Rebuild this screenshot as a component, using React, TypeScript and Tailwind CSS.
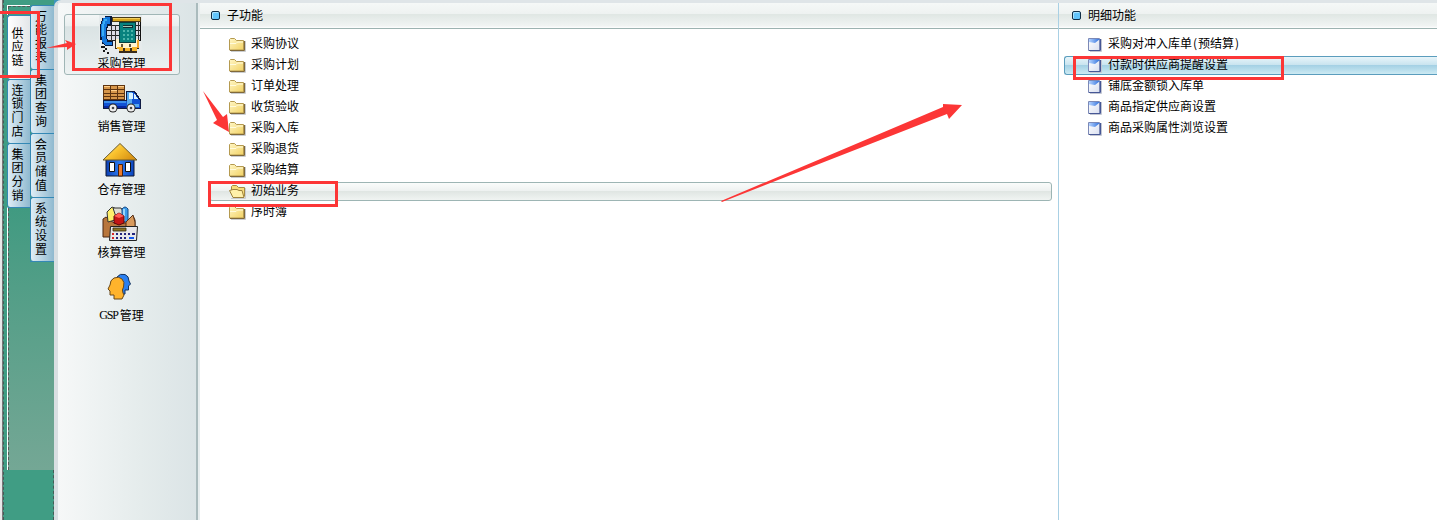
import React from "react";

const FONT = "font-['Noto_Sans_CJK_SC','Liberation_Sans',sans-serif]";

function PhoneIcon() {
  return (
    <svg width="44" height="40" viewBox="0 0 44 40" shapeRendering="crispEdges">
      <rect width="43" height="39" fill="#e6ebec" />
      <path d="M8 10h34v16H8z" fill="#222" />
      <path d="M8 11h13v4H8zM8 16h13v4H8zM8 21h13v4H8zM37 7h4v3h-4zM37 11h4v4h-4zM37 16h4v4h-4zM37 21h4v4h-4z" fill="#dcdce6" />
      <path d="M12 10h1v16h-1zM16 10h1v16h-1zM39 7h1v19h-1z" fill="#333" />
      <path d="M41 3h1v23h-1z" fill="#111" />
      <path d="M13 2h29v5H13z" fill="#4b3b16" />
      <path d="M14 3h27v3H14z" fill="#d8a51d" />
      <path d="M14 3h27v1H14z" fill="#f2cf5a" />
      <path d="M16 24h24v10h-2v4H20v-4h-4z" fill="#382c1c" />
      <path d="M17 24h22v9H17z" fill="#fff4cf" />
      <path d="M18 32h6v4h-4v-2h-2zM26 33h5v3h-5zM33 32h5v4h-5z" fill="#f5b52c" />
      <path d="M38 25h2v8h-2z" fill="#f0a52c" />
      <path d="M22 29h2v3h-2zM30 29h2v3h-2z" fill="#62563d" />
      <path d="M20 7h17v21H20z" fill="#063e40" />
      <path d="M21 8h15v19H21z" fill="#08827f" />
      <path d="M24 10h10v3H24z" fill="#102d32" />
      <path d="M24 11h9v1h-9z" fill="#a7c7b4" />
      {[15, 19, 23].map((y) => [24, 28, 32].map((x) => <path key={`${x}-${y}`} d={`M${x} ${y}h2v2h-2z`} fill="#4cb4aa" />))}
      <path d="M6 1h7v9h-4v3H8v11h1v2h5v5H6l-2-2H3v-4H1V9h1V6h1V3h3z" fill="#07183c" />
      <path d="M6 2h5v7H8v3H7v12h1v3h5v3H6l-2-3H3v-5H2V9h1V6h1V3h2z" fill="#1578dc" />
      <path d="M5 4h3v2H6v3H4V6h1zM3 9h2v12H3z" fill="#38acf6" />
      <path d="M4 31h2v2h2v2H6v2h4v2H8v-2H4v-2h2v-2H4zM2 31h2v2H2z" fill="#171717" />
    </svg>
  );
}

function TruckIcon() {
  return (
    <svg width="39" height="29" viewBox="0 0 39 29" shapeRendering="crispEdges">
      <path d="M1 1h22v15H1z" fill="#5e3410" />
      <path d="M2 2h6v3H2zM9 2h6v3H9zM16 2h6v3h-6zM2 6h6v3H2zM9 6h6v3H9zM16 6h6v3h-6zM2 10h6v2H2zM9 10h6v2H9zM16 10h6v2h-6zM2 13h6v2H2zM9 13h6v2H9zM16 13h6v2h-6z" fill="#d6964a" />
      <path d="M2 2h6v1H2zM9 6h6v1H9zM16 2h6v1h-6z" fill="#ffcf8a" />
      <path d="M0 16h24V7h9l4 6 2 3v9H1V16z" fill="#101c44" />
      <path d="M2 17h23V8h7l4 6 2 3v7H2z" fill="#1152d4" />
      <path d="M25 8h5v12h7v3H25z" fill="#57a9ef" />
      <path d="M27 9h4v6h-4zM32 9l4 6h-4z" fill="#d9f4ff" />
      <path d="M2 17h22v2H2z" fill="#3c8fed" />
      <path d="M2 22h22v2H2z" fill="#0726a0" />
      {[11, 29].map((x) => (
        <g key={x} shapeRendering="auto">
          <circle cx={x} cy="24" r="4.500" fill="#222" />
          <circle cx={x} cy="24" r="3.500" fill="#eee" />
          <circle cx={x} cy="24" r="1.300" fill="#444" />
        </g>
      ))}
    </svg>
  );
}

function HouseIcon() {
  return (
    <svg width="36" height="36" viewBox="0 0 36 36">
      <defs>
        <linearGradient id="roof" x1="0" x2="1" y1="0" y2=".6">
          <stop stopColor="#fff0a0" />
          <stop offset=".5" stopColor="#fac32e" />
          <stop offset="1" stopColor="#d99415" />
        </linearGradient>
        <linearGradient id="wall">
          <stop stopColor="#0b3fb3" />
          <stop offset=".5" stopColor="#2d7bf2" />
          <stop offset="1" stopColor="#0b45bd" />
        </linearGradient>
      </defs>
      <path d="M4 17h28v17H4z" fill="url(#wall)" stroke="#101930" />
      <path d="M18 1.500 1 18h34z" fill="url(#roof)" stroke="#6b5a2b" />
      <path d="M7.500 20.500h5v9h-5zM23.500 20.500h5v9h-5z" fill="#fff" stroke="#111" />
      <path d="M16.500 22.500h4V34h-4z" fill="#ec7c2b" stroke="#4b200b" />
    </svg>
  );
}

function AccountingIcon() {
  return (
    <svg width="37" height="36" viewBox="0 0 37 36">
      <path d="M1 13 4 11 12 17 24 17 31 10 33 14V31H1z" fill="#b8763c" stroke="#4a2915" />
      <path d="m5 6 5-5 7 3-4 10-7 2z" fill="#fff06b" stroke="#333" />
      <path d="M11 2h8l4 6-9 3z" fill="#deded4" stroke="#333" />
      <path d="M20 3q3-4 6 0v13h-6z" fill="#3b9be9" stroke="#174884" />
      <path d="M22 3v12" stroke="#b9e9ff" strokeWidth="1.500" />
      <path d="m12 10 5-3 5 3v7l-5 2-5-2z" fill="#c51616" stroke="#5b0909" />
      <path d="m12 10 5-3 5 3-5 2z" fill="#ff5b52" />
      <path d="m24 16 7-7 2 7v5h-9z" fill="#d89a5c" stroke="#563018" />
      <path d="M8.500 20.500h27l-1 14h-27z" fill="#e7e7ea" stroke="#222" />
      <path d="M11 22h13v3H11z" fill="#8c7525" stroke="#332a0d" strokeWidth=".8" />
      <g shapeRendering="crispEdges">
        <path d="M10 27h2v2h-2zM10 31h2v2h-2z" fill="#d62323" />
        <path d="M14 27h2v2h-2zM18 27h2v2h-2zM22 27h2v2h-2zM26 27h2v2h-2zM30 27h3v2h-3zM14 31h2v2h-2zM18 31h2v2h-2zM22 31h2v2h-2z" fill="#24247d" />
        <path d="M27 31h5v2h-5z" fill="#1559ee" />
      </g>
    </svg>
  );
}

function PeopleIcon() {
  return (
    <svg width="25" height="27" viewBox="0 0 25 27">
      <path d="M10 4Q13 0 18 1.500 22 3 22 8l1.500 3-2 2v4H18v4l-6 1z" fill="#2a7ff0" stroke="#14335e" />
      <path d="M7 5q5-2 8 1 3 3 1.500 8-2 3-.5 6l1 2-2 4H7v-4H3v-4l-2-2 2-4q0-5 4-7z" fill="#ffb32c" stroke="#684719" />
    </svg>
  );
}

function FolderIcon({ open = false }: { open?: boolean }) {
  return (
    <svg width="17" height="15" viewBox="0 0 17 15" className="shrink-0">
      <defs>
        <linearGradient id="manila" x1="0" x2="1" y1="0" y2="1">
          <stop stopColor="#fff6c4" />
          <stop offset="1" stopColor="#f2d264" />
        </linearGradient>
      </defs>
      <path d="M2 14.500h14.500V4" fill="none" stroke="#c9ccd0" />
      {open ? (
        <>
          <path d="M2.500 10V2.500l1-1h4l2 2h6v9" fill="#f7dc79" stroke="#a58a42" />
          <path d="M.5 6.500 4 5.500h4l2 1h3l2 7H4z" fill="#fff0a9" stroke="#9e823c" />
        </>
      ) : (
        <>
          <path d="M.5 13V2.500l1-1h4l2 2h7V13z" fill="url(#manila)" stroke="#b59a50" />
          <path d="M1 6.500h6l1.500-1.500H14" fill="none" stroke="#fffbdc" />
          <path d="M1 13.500h14.500V4" fill="none" stroke="#80693a" />
        </>
      )}
    </svg>
  );
}

function FormIcon() {
  return (
    <svg width="14" height="15" viewBox="0 0 14 15" className="shrink-0">
      <defs>
        <linearGradient id="flap" x1="0" x2="1">
          <stop stopColor="#b3d2ff" />
          <stop offset="1" stopColor="#2f6fdb" />
        </linearGradient>
        <linearGradient id="sheet" x1="0" x2="1" y1="0" y2="1">
          <stop stopColor="#fff" />
          <stop offset="1" stopColor="#d9dff0" />
        </linearGradient>
      </defs>
      <path d="M2 14.500h11.500V2" fill="none" stroke="#c3c7d3" />
      <path d="M.5 1.500h11v12H.5z" fill="url(#sheet)" stroke="#7c89b6" />
      <path d="M1 2h11L7 6 1 5z" fill="url(#flap)" />
      <path d="M1 13.500h11.500V2" fill="none" stroke="#465795" />
    </svg>
  );
}

function PanelHeader({ title }: { title: string }) {
  return (
    <div className="flex h-[26px] shrink-0 items-center border-b border-[#9db3b1] bg-[linear-gradient(#f5f8f7,#eef2f1_44%,#e0e7e4_46%,#f1f4f3_92%,#fff)] text-[12px]">
      <i className="mr-[7px] h-[9px] w-[9px] rounded-[2px] border border-[#102d46] bg-[#62c4fb] shadow-[inset_1px_1px_0_#a9e2ff]" />
      <span className="-translate-y-px">{title}</span>
    </div>
  );
}

function VerticalTab({ label, active = false }: { label: string; active?: boolean }) {
  return (
    <div
      className={`flex h-16 shrink-0 flex-col items-center justify-center rounded-l-[3px] border-t border-l border-[#3488b5] pr-[3px] pb-[3px] text-[12px] ${
        active ? "bg-linear-to-r from-white to-[#e3e6e8]" : "bg-linear-to-r from-[#dfedf5] to-[#8fb9cf]"
      }`}
    >
      {[...label].map((c, i) => (
        <span key={i} className="block h-[13.600px] leading-[13.600px]">{c}</span>
      ))}
    </div>
  );
}

const modules = [
  { label: "采购管理", icon: <PhoneIcon />, shift: "pr-[3px]" },
  { label: "销售管理", icon: <TruckIcon />, shift: "pr-[2px] pt-px" },
  { label: "仓存管理", icon: <HouseIcon />, shift: "pr-[5px] pb-[2px]" },
  { label: "核算管理", icon: <AccountingIcon />, shift: "pr-[4px]" },
  { label: "管理", latin: "GSP", icon: <PeopleIcon />, shift: "pr-[5px] pb-[2px]" },
];

const subFunctions = ["采购协议", "采购计划", "订单处理", "收货验收", "采购入库", "采购退货", "采购结算", "初始业务", "序时簿"];
const details = ["采购对冲入库单(预结算)", "付款时供应商提醒设置", "铺底金额锁入库单", "商品指定供应商设置", "商品采购属性浏览设置"];

function RowText({ text }: { text: string }) {
  return (
    <span className="-translate-y-[2px] whitespace-pre">
      {text.split(/([()])/).map((part, i) =>
        part === "(" || part === ")" ? (
          <span key={i} className="inline-block w-[6px] text-center">{part}</span>
        ) : (
          part
        ),
      )}
    </span>
  );
}

export default function App() {
  return (
    <div className={`relative flex h-[520px] w-[1437px] overflow-hidden bg-white text-[12px] leading-[14px] text-black ${FONT}`}>
      <nav className="flex w-[54px] shrink-0 border-l-2 border-[#e8e8e8] bg-[#409d84]">
        <div className="w-[5px] shrink-0 border-l border-[#777] bg-[#409d84]">
          <div className="h-full border-l border-dashed border-[#455b57]" />
        </div>
        <div className="flex w-[23px] shrink-0 flex-col">
          <div className="h-[5px] shrink-0" />
          <div className="h-[10px] shrink-0 border-t border-l border-white">
            <div className="h-full border-t border-l border-dashed border-[#555]" />
          </div>
          <VerticalTab label="供应链" active />
          <VerticalTab label="连锁门店" />
          <VerticalTab label="集团分销" />
          <div className="h-[263px] shrink-0 border-t border-l border-t-[#3488b5] border-l-white bg-linear-to-b from-[#409a81] to-[#74a795]">
            <div className="h-full border-l border-dashed border-[#555]" />
          </div>
        </div>
        <div className="flex w-[24px] shrink-0 flex-col pt-[5px]">
          <VerticalTab label="万能报表" />
          <VerticalTab label="集团查询" />
          <VerticalTab label="会员储值" />
          <VerticalTab label="系统设置" />
          <div className="h-[209px] shrink-0 border-t border-[#3488b5] bg-linear-to-b from-[#4c9d85] to-[#74a795]" />
          <div className="flex-1 border-r border-dashed border-[#455b57]" />
        </div>
      </nav>

      <div className="flex min-w-0 flex-1 flex-col bg-[#3f96bd]">
        <div className="flex min-h-0 flex-1 rounded-tl-[7px] border-t-[3px] border-l-[4px] border-t-[#dfe5e8] border-l-[#d9dfe2] bg-white">
          <aside className="flex w-[138px] shrink-0 flex-col rounded-tl-[4px] bg-linear-to-r from-[#f6f8f8] via-[#e5ecec] via-60% to-[#dbe4e6] pt-[11px] pl-[6px]">
            {modules.map((m, i) => (
              <div
                key={m.label + i}
                className={`flex w-[116px] flex-col items-center rounded-[3px] border ${
                  i === 0
                    ? "mb-[2px] h-[61px] border-[#a0b6b6] bg-[linear-gradient(#f3f6f6,#e9efef_18%,#dae3e4_20%,#edf2f2)]"
                    : "h-[63px] border-transparent"
                }`}
              >
                <div className={`flex h-[40px] shrink-0 items-center justify-center ${m.shift}`}>{m.icon}</div>
                <div className="flex h-[16px] items-center pr-px whitespace-nowrap">
                  {m.latin && <span className="mr-[2px] font-['Liberation_Serif',serif] text-[12px] tracking-[-1.200px]">{m.latin}</span>}
                  {m.label}
                </div>
              </div>
            ))}
          </aside>
          <div className="w-[2px] shrink-0 bg-[#aabbbd]" />

          <main className="flex w-[860px] shrink-0 flex-col border-l-2 border-[#e7edee]">
            <div className="flex flex-col *:pl-[11px]">
              <PanelHeader title="子功能" />
            </div>
            <div className="flex flex-col pt-[5px] pr-[6px] pl-[9px]">
              {subFunctions.map((name) => (
                <div key={name} className="h-[21px] py-px">
                  <div
                    className={`flex h-[19px] items-center gap-[5px] rounded-[3px] border pl-[19px] ${
                      name === "初始业务"
                        ? "border-[#9db5b4] bg-[linear-gradient(#fafcfb,#edf1f0_48%,#e0e6e3_50%,#f0f4f2)]"
                        : "border-transparent"
                    }`}
                  >
                    <FolderIcon open={name === "初始业务"} />
                    <RowText text={name} />
                  </div>
                </div>
              ))}
            </div>
          </main>

          <section className="flex min-w-0 flex-1 flex-col border-l border-[#a9d0e4]">
            <div className="flex flex-col *:pl-[13px]">
              <PanelHeader title="明细功能" />
            </div>
            <div className="flex flex-col pt-[5px] pl-[5px]">
              {details.map((name, i) => (
                <div key={name} className="h-[21px] py-px">
                  <div
                    className={`flex h-[19px] items-center gap-[6px] rounded-l-[3px] border border-r-0 pl-[23px] ${
                      i === 1
                        ? "border-[#5b9dbd] bg-[linear-gradient(#e8f5fa,#c9e4ef_46%,#a3d0e4_48%,#cceaf3)]"
                        : "border-transparent"
                    }`}
                  >
                    <FormIcon />
                    <RowText text={name} />
                  </div>
                </div>
              ))}
            </div>
          </section>
        </div>
      </div>

      <div className="absolute top-[11px] -left-[3px] h-[67px] w-[43px] border-3 border-[#fc3636]" />
      <div className="absolute top-[3px] left-[72px] h-[68px] w-[100px] border-3 border-[#fc3636]" />
      <div className="absolute top-[181px] left-[208px] h-[26px] w-[130px] border-3 border-[#fc3636]" />
      <div className="absolute top-[56px] left-[1073px] h-[24px] w-[211px] border-3 border-[#fc3636]" />
      <svg className="absolute top-0 left-0" width="1437" height="520" viewBox="0 0 1437 520" fill="#fc3636">
        <path d="M46 48 67 43 65 40 76 44 67 50 67 47z" />
        <path d="M203 91 223 117 227 114 229 132 213 123 217 120z" />
        <path d="M721 201 943 107 943 104 962 105 949 119 947 114 722 202z" />
      </svg>
    </div>
  );
}
